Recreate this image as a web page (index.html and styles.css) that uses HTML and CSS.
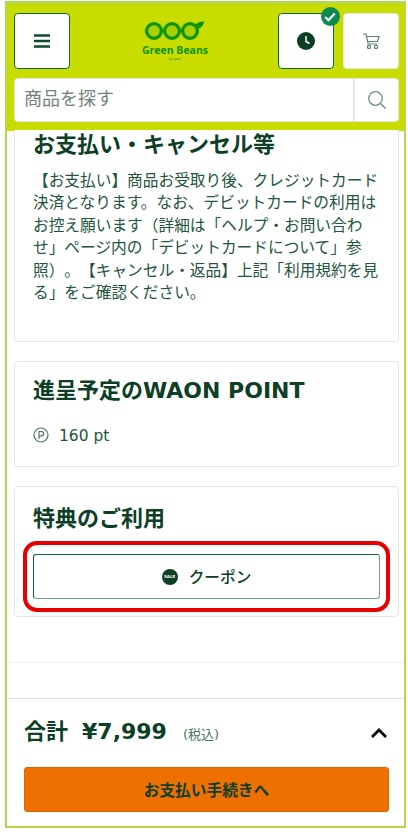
FILE: index.html
```html
<!DOCTYPE html>
<html lang="ja">
<head>
  <meta charset="UTF-8" />
  <meta name="viewport" content="width=device-width, initial-scale=1.0"/>
  <title>Green Beans</title>
  <link rel="stylesheet" href="styles.css">
</head>
<body>
  <div class="frame">
    <!-- Header -->
    <header class="site-header">
      <div class="header-top">
        <button class="icon-btn active" aria-label="menu">
          <svg width="18" height="14" viewBox="0 0 18 14"><path d="M1 1.500h16M1 7h16M1 12.500h16" stroke="#0c4a2a" stroke-width="2.400"/></svg>
        </button>
        <div class="logo">
          <svg width="60" height="20" viewBox="0 0 60 20">
            <g fill="#a8d000" stroke="#0b9500" stroke-width="3.200">
              <circle cx="9" cy="10" r="7.400"/>
              <circle cx="27" cy="10" r="7.400"/>
              <circle cx="45" cy="10" r="7.400"/>
            </g>
            <path d="M0 10l2-1.500v3zM50 4c2-2.500 5-3.500 9-3.500-.5 4-3 7-7.500 7.500z" fill="#0b9500"/>
          </svg>
          <span class="logo-name">Green Beans</span>
          <span class="logo-by">by aeon</span>
        </div>
        <div class="header-right">
          <button class="icon-btn active" aria-label="history">
            <svg width="18" height="18" viewBox="0 0 18 18"><circle cx="9" cy="9" r="9" fill="#0c3f26"/><path d="M9 4v5.500l3.500 2" fill="none" stroke="#fff" stroke-width="1.500"/></svg>
            <span class="check-badge">
              <svg width="12" height="10" viewBox="0 0 12 10"><path d="M1.200 5l3.200 3.200L10.800 1.500" fill="none" stroke="#fff" stroke-width="2.200"/></svg>
            </span>
          </button>
          <button class="icon-btn" aria-label="cart">
            <svg width="18" height="17" viewBox="0 0 18 17"><path d="M1 1h3l2.200 10h9M4.500 3.500H17l-1.500 5H5.500" fill="none" stroke="#5f8272" stroke-width="1.200"/><circle cx="7" cy="14" r="1.600" fill="none" stroke="#5f8272" stroke-width="1.200"/><circle cx="14" cy="14" r="1.600" fill="none" stroke="#5f8272" stroke-width="1.200"/></svg>
          </button>
        </div>
      </div>
      <div class="search-box">
        <div class="search-text">商品を探す</div>
        <div class="search-btn">
          <svg width="20" height="20" viewBox="0 0 20 20"><circle cx="8.500" cy="8.500" r="6.800" fill="none" stroke="#6f8f80" stroke-width="1.300"/><path d="M13.500 13.500l5 5" stroke="#6f8f80" stroke-width="1.500"/></svg>
        </div>
      </div>
    </header>

    <!-- Cards -->
    <main class="content">
      <section class="card card-payment">
        <h2>お支払い・キャンセル等</h2>
        <p>【お支払い】商品お受取り後、クレジットカード決済となります。なお、デビットカードの利用はお控え願います（詳細は「ヘルプ・お問い合わせ」ページ内の「デビットカードについて」参照）。【キャンセル・返品】上記「利用規約を見る」をご確認ください。</p>
      </section>

      <section class="card card-points">
        <h2>進呈予定のWAON POINT</h2>
        <div class="points">
          <svg class="points-icon" width="16" height="16" viewBox="0 0 16 16"><circle cx="8" cy="8" r="7" fill="none" stroke="#4b7763" stroke-width="1.200"/><path d="M6 12V4.500h2.500a2 2 0 0 1 0 4.300H6" fill="none" stroke="#4b7763" stroke-width="1.200"/></svg>
          <span>160 pt</span>
        </div>
      </section>

      <section class="card card-benefit">
        <h2>特典のご利用</h2>
        <div class="highlight">
          <button class="coupon-btn">
            <span class="sale-icon">SALE</span>
            クーポン
          </button>
        </div>
      </section>
    </main>

    <div class="divider"></div>

    <!-- Footer -->
    <footer class="total-bar">
      <div class="total-row">
        <span class="total-label">合計</span>
        <span class="total-price">¥7,999</span>
        <span class="total-tax">(税込)</span>
        <svg class="chevron" width="18" height="11" viewBox="0 0 18 11"><path d="M2 9l7-7 7 7" fill="none" stroke="#000" stroke-width="2.800"/></svg>
      </div>
      <button class="pay-btn">お支払い手続きへ</button>
    </footer>
  </div>
</body>
</html>
```

FILE: styles.css
```css
* {
  box-sizing: border-box;
}

html, body {
  height: 100%;
}

body {
  margin: 0;
  padding: 1px 2px 4px 5px;
  background-color: #fff;
  color: #0c3f26;
  font-family: "DejaVu Sans", "Noto Sans CJK JP", sans-serif;
  text-spacing-trim: space-all;
}

button {
  font-family: inherit;
  cursor: pointer;
}

.frame {
  display: flex;
  flex-direction: column;
  height: 100%;
  border: 2px solid #b3d84a;
  border-top-width: 3px;
  background-color: #fff;
}

.site-header {
  height: 127px;
  padding: 9px 5px 0 7px;
  background-color: #c8dc00;
}

.header-top {
  display: flex;
  justify-content: space-between;
  align-items: center;
}

.header-right {
  display: flex;
  gap: 9px;
}

.icon-btn {
  position: relative;
  display: flex;
  align-items: center;
  justify-content: center;
  width: 56px;
  height: 56px;
  padding: 0;
  background-color: #fff;
  border: 1px solid #e6e6e6;
  border-radius: 4px;
}

.icon-btn.active {
  border-color: #0c6a3a;
}

.check-badge {
  position: absolute;
  top: -7px;
  right: -7px;
  display: flex;
  align-items: center;
  justify-content: center;
  width: 19px;
  height: 19px;
  border-radius: 50%;
  background-color: #0c8a50;
}

.logo {
  display: flex;
  flex-direction: column;
  align-items: center;
  margin-left: 2px;
  color: #0b9500;
}

.logo-name {
  margin-top: 3px;
  font-family: "Open Sans", sans-serif;
  font-size: 10.500px;
  font-weight: 700;
  line-height: 13px;
}

.logo-by {
  font-size: 3px;
  line-height: 5px;
}

.search-box {
  display: flex;
  height: 44px;
  margin-top: 9px;
  background-color: #fff;
  border: 1px solid #e6e6e6;
  border-radius: 4px;
}

.search-text {
  flex-grow: 1;
  padding-left: 9px;
  color: #75827c;
  font-size: 18px;
  line-height: 40px;
}

.search-btn {
  display: flex;
  align-items: center;
  justify-content: center;
  width: 45px;
  border-left: 2px solid #e6e6e6;
}

.content {
  display: flex;
  flex-direction: column;
  gap: 19px;
  padding: 0 5px 0 7px;
}

.card {
  padding: 0 18px;
  background-color: #fff;
  border: 1px solid #e6e6e6;
  border-radius: 4px;
}

.card h2 {
  margin: 0;
  font-size: 22px;
  font-weight: 700;
  line-height: 30px;
}

.card-payment {
  height: 212px;
  margin-top: -1px;
  border-top: none;
  border-radius: 0 0 4px 4px;
}

.card-payment p {
  margin: 10px 0 0;
  color: #23543c;
  font-size: 15.700px;
  line-height: 22.400px;
}

.card-points {
  height: 106px;
  padding-top: 14px;
}

.points {
  display: flex;
  align-items: center;
  gap: 10px;
  margin-top: 20px;
  color: #23543c;
  font-size: 15.500px;
  line-height: 20px;
}

.points-icon {
  margin-top: -3px;
}

.card-benefit {
  height: 131px;
  padding: 17px 8px 0;
}

.card-benefit h2 {
  padding-left: 10px;
}

.highlight {
  margin-top: 7px;
  padding: 9px 6px;
  border: 4px solid #e60000;
  border-radius: 14px;
}

.coupon-btn {
  display: flex;
  align-items: center;
  justify-content: center;
  gap: 11px;
  width: 100%;
  height: 45px;
  background-color: #fff;
  border: 1px solid #0c6a3a;
  border-bottom-color: #6aa585;
  border-right-color: #6aa585;
  border-radius: 3px;
  color: #0c3f26;
  font-size: 15.700px;
  font-weight: 500;
}

.sale-icon {
  display: flex;
  align-items: center;
  justify-content: center;
  width: 16px;
  height: 16px;
  border-radius: 50%;
  background-color: #0c3f26;
  color: #fff;
  font-size: 4px;
  font-weight: 700;
}

.divider {
  height: 1px;
  margin-top: 45px;
  background-color: #efefef;
}

.total-bar {
  flex-grow: 1;
  margin-top: 35px;
  padding: 0 15px 0 17px;
  border-top: 1px solid #dfdfdf;
}

.total-row {
  display: flex;
  align-items: baseline;
  height: 68px;
  padding-top: 18px;
}

.total-label {
  font-size: 22px;
  font-weight: 700;
  line-height: 30px;
}

.total-price {
  margin-left: 14px;
  font-size: 22px;
  font-weight: 700;
}

.total-tax {
  margin-left: 16px;
  color: #4b7763;
  font-size: 13px;
}

.chevron {
  align-self: center;
  margin-left: auto;
  margin-right: 1px;
  margin-top: -18px;
}

.pay-btn {
  display: block;
  width: 100%;
  height: 45px;
  background-color: #ee7000;
  border: 1px solid #e46000;
  border-radius: 3px;
  color: #0c3f26;
  font-size: 15.700px;
  font-weight: 700;
}
```
